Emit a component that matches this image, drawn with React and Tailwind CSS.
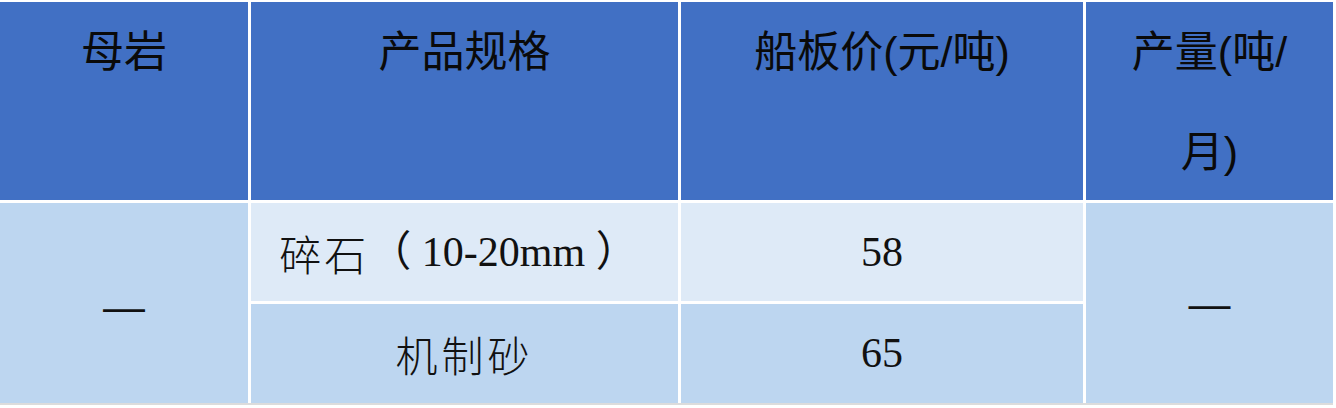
import React from "react";

const head = "flex justify-center bg-[#4170c4] text-[43px] font-normal leading-[100px] text-[#0a0a0a] text-center";
const sans = { fontFamily: '"Liberation Sans", "Noto Sans CJK SC", sans-serif' };

export default function App() {
  return (
    <div className="w-[1336px] h-[408px] bg-white pt-[2px]">
      <div
        className="grid grid-cols-[248px_427px_402px_247px] grid-rows-[198px_98px_99px] gap-[3px] border-b-[2px] border-[#dcdcdc] w-[1333px]"
        style={sans}
      >
        <div className={head}>母岩</div>
        <div className={head}>产品规格</div>
        <div className={head}>船板价(元/吨)</div>
        <div className={head}>
          <span className="w-[175px]">产量(吨/月)</span>
        </div>

        <div className="row-span-2 bg-[#bdd6f0] flex items-center justify-center pt-[6px] text-[42px] text-[#111]">
          —
        </div>
        <div className="bg-[#deeaf7] flex items-center justify-center pr-[12px] text-[42px] text-[#111]">
          <span className="tracking-[3px]" style={{ fontFamily: '"Noto Sans CJK SC", sans-serif', fontWeight: 300 }}>碎石</span>
          <span className="whitespace-pre" style={{ fontFamily: '"Liberation Serif", "Noto Sans CJK SC", serif' }}>（ 10-20mm ）</span>
        </div>
        <div className="bg-[#deeaf7] flex items-center justify-center text-[42px] text-[#111]" style={{ fontFamily: '"Liberation Serif", serif' }}>
          58
        </div>
        <div className="row-span-2 bg-[#bdd6f0] flex items-center justify-center text-[42px] text-[#111]">
          —
        </div>

        <div className="bg-[#bdd6f0] flex items-center justify-center text-[42px] text-[#111] tracking-[4px]" style={{ fontFamily: '"Noto Sans CJK SC", sans-serif', fontWeight: 300 }}>
          机制砂
        </div>
        <div className="bg-[#bdd6f0] flex items-center justify-center text-[42px] text-[#111]" style={{ fontFamily: '"Liberation Serif", serif' }}>
          65
        </div>
      </div>
    </div>
  );
}
